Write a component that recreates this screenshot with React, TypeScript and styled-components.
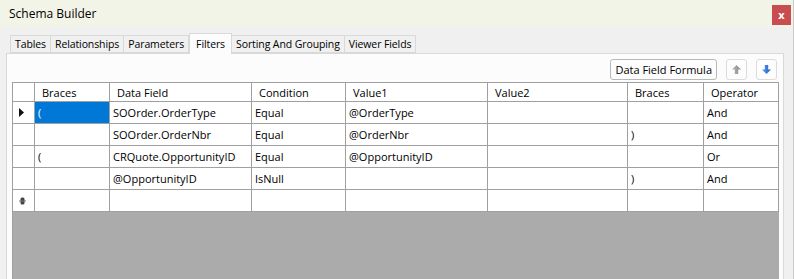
import React from 'react';
import styled, { createGlobalStyle } from 'styled-components';

const GlobalStyle = createGlobalStyle`
  html, body {
    margin: 0;
    padding: 0;
    background: #f0f0f0;
  }
  #root {
    width: 794px;
    height: 279px;
    overflow: hidden;
  }
`;

const Window = styled.div`
  width: 794px;
  height: 279px;
  display: flex;
  flex-direction: column;
  background: #f0f0f0;
  font-family: "Open Sans", "Liberation Sans", sans-serif;
  font-size: 11px;
  color: #000;
  box-sizing: border-box;
  border-right: 1px solid #c9c9c9;
  overflow: hidden;
`;

const TitleBar = styled.div`
  height: 27px;
  flex: none;
  display: flex;
  align-items: center;
  justify-content: space-between;
  padding: 0 2px 0 9px;
  background: #f3f4e8;
  font-size: 12px;
`;

const CloseButton = styled.div`
  width: 19px;
  height: 20px;
  margin-top: 2px;
  background: #c94c4f;
  color: #fff;
  font-size: 11px;
  font-weight: bold;
  display: flex;
  align-items: center;
  justify-content: center;
`;

const Body = styled.div`
  flex: 1;
  display: flex;
  flex-direction: column;
  padding: 6px 9px 0 6px;
  min-height: 0;
`;

const TabStrip = styled.div`
  display: flex;
  align-items: flex-end;
  height: 20px;
  padding-left: 4px;
`;

const Tab = styled.div<{ $active?: boolean }>`
  box-sizing: border-box;
  height: ${(p) => (p.$active ? '21px' : '18px')};
  margin-bottom: ${(p) => (p.$active ? '-1px' : '0')};
  padding: 0 ${(p) => (p.$active ? '6px' : '4px')};
  display: flex;
  align-items: center;
  font-size: 10.5px;
  letter-spacing: -0.1px;
  border: 1px solid #d9d9d9;
  border-bottom: ${(p) => (p.$active ? 'none' : '1px solid #d9d9d9')};
  border-left: ${(p) => (p.$active ? '1px solid #d9d9d9' : 'none')};
  background: ${(p) => (p.$active ? '#fcfcfc' : '#f0f0f0')};
  position: relative;
  z-index: ${(p) => (p.$active ? 1 : 0)};
  &:first-child {
    border-left: 1px solid #d9d9d9;
  }
`;

const Panel = styled.div`
  flex: 1;
  display: flex;
  flex-direction: column;
  border: 1px solid #d9d9d9;
  border-bottom: none;
  background: #fcfcfc;
  padding: 5px 4px 0 5px;
  min-height: 0;
`;

const Toolbar = styled.div`
  display: flex;
  justify-content: flex-end;
  align-items: center;
  gap: 9px;
  height: 21px;
  padding-right: 2px;
  margin-bottom: 2px;
`;

const ToolButton = styled.div<{ $square?: boolean }>`
  box-sizing: border-box;
  height: 21px;
  width: ${(p) => (p.$square ? '21px' : 'auto')};
  padding: ${(p) => (p.$square ? '0' : '0 4px')};
  display: flex;
  align-items: center;
  justify-content: center;
  border: 1px solid ${(p) => (p.$square ? '#dcdcdc' : '#b9b9b9')};
  border-radius: 3px;
  background: #fdfdfd;
`;

const Grid = styled.div`
  flex: 1;
  background: #ababab;
  border-left: 1px solid #a0a0a0;
  border-top: 1px solid #a0a0a0;
  display: grid;
  grid-template-columns: 22px 75px 142px 94px 142px 140px 76px 75px;
  grid-template-rows: 19px;
  grid-auto-rows: 22px;
  align-content: start;
  width: 767px;
  box-sizing: border-box;
`;

const HeaderCell = styled.div`
  box-sizing: border-box;
  background: #fff;
  border-right: 1px solid #a0a0a0;
  border-bottom: 1px solid #a0a0a0;
  padding-left: 7px;
  display: flex;
  align-items: center;
  white-space: nowrap;
`;

const Cell = styled.div<{ $selected?: boolean }>`
  box-sizing: border-box;
  background: ${(p) => (p.$selected ? '#0078d7' : '#fff')};
  color: ${(p) => (p.$selected ? '#fff' : '#000')};
  border-right: 1px solid #a0a0a0;
  border-bottom: 1px solid #a0a0a0;
  padding-left: 3px;
  display: flex;
  align-items: center;
  white-space: nowrap;
  overflow: hidden;
`;

const RowHead = styled.div`
  box-sizing: border-box;
  background: #fff;
  border-right: 1px solid #a0a0a0;
  border-bottom: 1px solid #a0a0a0;
  display: flex;
  align-items: center;
  justify-content: center;
`;

const Arrow = ({ up }: { up?: boolean }) => (
  <svg width="11" height="11" viewBox="0 0 11 11">
    <defs>
      <linearGradient id={up ? 'gu' : 'gd'} x1="0" y1="0" x2="1" y2="0">
        <stop offset="0" stopColor={up ? '#b5b5b5' : '#5b9af0'} />
        <stop offset="1" stopColor={up ? '#8a8a8a' : '#1f5fc8'} />
      </linearGradient>
    </defs>
    <polygon
      points={up ? '5.5,1 10,5.5 7.2,5.5 7.2,10 3.8,10 3.8,5.5 1,5.5' : '5.5,10 10,5.5 7.2,5.5 7.2,1 3.8,1 3.8,5.5 1,5.5'}
      fill={`url(#${up ? 'gu' : 'gd'})`}
    />
  </svg>
);

const CurrentMark = () => (
  <svg width="6" height="9" viewBox="0 0 6 9" style={{ marginLeft: -3 }}>
    <polygon points="0,0 5,4.5 0,9" fill="#111" />
  </svg>
);

const NewRowMark = () => (
  <svg width="7" height="8" viewBox="0 0 7 8" style={{ marginLeft: -2 }}>
    <rect x="1.5" y="0.5" width="4" height="7" rx="1.5" fill="#444" />
    <line x1="0" y1="4" x2="7" y2="4" stroke="#777" strokeWidth="1" />
  </svg>
);

const headers = ['', 'Braces', 'Data Field', 'Condition', 'Value1', 'Value2', 'Braces', 'Operator'];

const rows = [
  ['(', 'SOOrder.OrderType', 'Equal', '@OrderType', '', '', 'And'],
  ['', 'SOOrder.OrderNbr', 'Equal', '@OrderNbr', '', ')', 'And'],
  ['(', 'CRQuote.OpportunityID', 'Equal', '@OpportunityID', '', '', 'Or'],
  ['', '@OpportunityID', 'IsNull', '', '', ')', 'And'],
];

const tabs = ['Tables', 'Relationships', 'Parameters', 'Filters', 'Sorting And Grouping', 'Viewer Fields'];

export default function App() {
  return (
    <>
      <GlobalStyle />
      <Window>
        <TitleBar>
          <span>Schema Builder</span>
          <CloseButton>x</CloseButton>
        </TitleBar>
        <Body>
          <TabStrip>
            {tabs.map((t) => (
              <Tab key={t} $active={t === 'Filters'}>
                {t}
              </Tab>
            ))}
          </TabStrip>
          <Panel>
            <Toolbar>
              <ToolButton>Data Field Formula</ToolButton>
              <ToolButton $square>
                <Arrow up />
              </ToolButton>
              <ToolButton $square>
                <Arrow />
              </ToolButton>
            </Toolbar>
            <Grid>
              {headers.map((h, i) => (
                <HeaderCell key={'h' + i}>{h}</HeaderCell>
              ))}
              {rows.map((r, ri) => (
                <React.Fragment key={ri}>
                  <RowHead>{ri === 0 && <CurrentMark />}</RowHead>
                  {r.map((c, ci) => (
                    <Cell key={ci} $selected={ri === 0 && ci === 0}>
                      {c}
                    </Cell>
                  ))}
                </React.Fragment>
              ))}
              <RowHead>
                <NewRowMark />
              </RowHead>
              {Array.from({ length: 7 }).map((_, i) => (
                <Cell key={'n' + i} />
              ))}
            </Grid>
          </Panel>
        </Body>
      </Window>
    </>
  );
}
